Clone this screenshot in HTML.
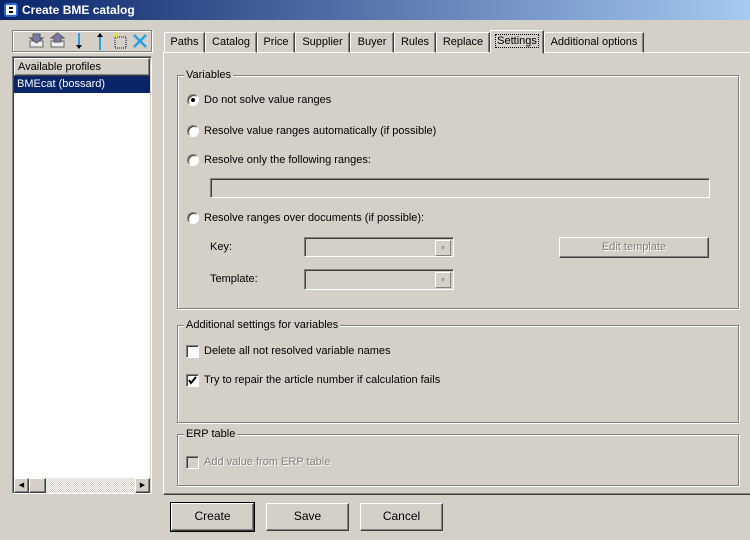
<!DOCTYPE html>
<html><head><style>
*{box-sizing:border-box;margin:0;padding:0}
body{width:750px;height:540px;background:#d4d0c8;font-family:"Liberation Sans",sans-serif;font-size:11px;color:#000;position:relative;overflow:hidden}
.a{position:absolute}
.title{left:0;top:0;width:750px;height:20px;background:linear-gradient(to right,#0a246a,#a6caf0);color:#fff;font-weight:bold;font-size:12px;line-height:20px;padding-left:22px}
.sunk{border:1px solid;border-color:#808080 #fff #fff #808080;box-shadow:inset 1px 1px 0 #404040,inset -1px -1px 0 #d4d0c8}
.etch{border:1px solid #808080;box-shadow:1px 1px 0 #fff,inset 1px 1px 0 #fff}
.btn{border:1px solid;border-color:#fff #404040 #404040 #fff;box-shadow:inset -1px -1px 0 #808080;text-align:center;line-height:25px;font-size:12px}
.tab{top:32px;height:21px;border:1px solid;border-color:#fff #404040 transparent #fff;box-shadow:inset -1px 0 0 #808080;font-size:11px;line-height:18px;text-align:center}
.gl{background:#d4d0c8;padding:0 2px;font-size:11px}
.radio{width:12px;height:12px;border-radius:50%;border:1px solid;border-color:#808080 #fff #fff #808080;background:#fff;box-shadow:inset 1px 1px 0 #404040}
.chk{width:13px;height:13px;border:1px solid;border-color:#808080 #fff #fff #808080;background:#fff;box-shadow:inset 1px 1px 0 #404040}
.lbl{font-size:11px}
.combo{background:#d4d0c8}
.arr{width:16px;height:16px;right:2px;top:2px;border:1px solid;border-color:#fff #808080 #808080 #fff;font-size:7px;color:#a0a0a0;text-align:center;line-height:15px}
</style></head><body>
<div class="a title">Create BME catalog</div>
<div class="a" style="left:4px;top:3px;width:14px;height:14px;border-radius:3px;background:#fff;border:2px solid #2a6ad0"><div style="margin:2px 3px;height:6px;border-top:2px solid #000;border-bottom:2px solid #000"></div></div>

<!-- toolbar -->
<div class="a etch" style="left:12px;top:30px;width:140px;height:22px"></div>
<svg class="a" style="left:28px;top:32px" width="125" height="18">
<rect x="2" y="9" width="13" height="6" fill="#eee" stroke="#666"/><path d="M5 2h7v4h3l-6.5 5-6.5-5h3z" fill="#7a7aa8" stroke="#555"/>
<rect x="23" y="9" width="13" height="6" fill="#eee" stroke="#666"/><path d="M29.5 1l6.5 5h-3v4h-7v-4h-3z" fill="#7a7aa8" stroke="#555"/>
<path d="M51 1v13" stroke="#2aa0e0" stroke-width="2"/><path d="M48 13h6l-3 4z" fill="#000"/>
<path d="M72 4v14" stroke="#2aa0e0" stroke-width="2"/><path d="M69 5h6l-3-4z" fill="#000"/>
<rect x="87" y="5" width="11" height="11" fill="none" stroke="#000080" stroke-dasharray="1 1"/><path d="M88 1l1 4M85 3l4 2" stroke="#ee0"/>
<path d="M106 3l12 12M118 3l-12 12" stroke="#2aa0e0" stroke-width="2.5"/>
</svg>

<!-- list -->
<div class="a sunk" style="left:12px;top:56px;width:140px;height:438px;background:#fff"></div>
<div class="a btn" style="left:14px;top:58px;width:136px;height:18px;line-height:16px;text-align:left;padding-left:3px;font-size:11px;background:#d4d0c8">Available profiles</div>
<div class="a" style="left:14px;top:76px;width:136px;height:17px;background:#0a246a;color:#fff;line-height:17px;padding-left:3px">BMEcat (bossard)</div>
<div class="a" style="left:14px;top:478px;width:136px;height:15px;background:repeating-conic-gradient(#d4d0c8 0 25%,#fff 0 50%) 0 0/2px 2px"></div>
<div class="a btn" style="left:14px;top:478px;width:15px;height:15px;font-size:7px;line-height:13px;background:#d4d0c8">◀</div>
<div class="a btn" style="left:29px;top:478px;width:17px;height:15px;background:#d4d0c8"></div>
<div class="a btn" style="left:135px;top:478px;width:15px;height:15px;font-size:7px;line-height:13px;background:#d4d0c8">▶</div>

<!-- tab panel -->
<div class="a" style="left:163px;top:52px;width:588px;height:443px;border-left:1px solid #fff;border-top:1px solid #fff;border-bottom:1px solid #404040;box-shadow:inset 0 -1px 0 #808080"></div>
<div class="a tab" style="left:164px;width:41px">Paths</div>
<div class="a tab" style="left:205px;width:52px">Catalog</div>
<div class="a tab" style="left:257px;width:38px">Price</div>
<div class="a tab" style="left:295px;width:55px">Supplier</div>
<div class="a tab" style="left:350px;width:44px">Buyer</div>
<div class="a tab" style="left:394px;width:42px">Rules</div>
<div class="a tab" style="left:436px;width:54px">Replace</div>
<div class="a tab" style="left:490px;top:30px;height:24px;width:54px;background:#d4d0c8;line-height:20px"><span style="outline:1px dotted #000;padding:0 1px">Settings</span></div>
<div class="a tab" style="left:544px;width:100px">Additional options</div>

<!-- Variables -->
<div class="a etch" style="left:177px;top:75px;width:562px;height:234px"></div>
<div class="a gl" style="left:184px;top:69px">Variables</div>
<div class="a radio" style="left:187px;top:94px"><div style="width:4px;height:4px;background:#000;border-radius:50%;margin:3px"></div></div>
<div class="a lbl" style="left:204px;top:94px">Do not solve value ranges</div>
<div class="a radio" style="left:187px;top:125px"></div>
<div class="a lbl" style="left:204px;top:125px">Resolve value ranges automatically (if possible)</div>
<div class="a radio" style="left:187px;top:154px"></div>
<div class="a lbl" style="left:204px;top:154px">Resolve only the following ranges:</div>
<div class="a sunk" style="left:210px;top:178px;width:500px;height:20px"></div>
<div class="a radio" style="left:187px;top:212px"></div>
<div class="a lbl" style="left:204px;top:212px">Resolve ranges over documents (if possible):</div>
<div class="a lbl" style="left:210px;top:241px">Key:</div>
<div class="a sunk combo" style="left:304px;top:237px;width:150px;height:20px"><div class="a arr">▼</div></div>
<div class="a btn" style="left:559px;top:237px;width:150px;height:21px;line-height:19px;color:#808080;font-size:11px;text-shadow:1px 1px 0 #fff">Edit template</div>
<div class="a lbl" style="left:210px;top:273px">Template:</div>
<div class="a sunk combo" style="left:304px;top:269px;width:150px;height:21px"><div class="a arr">▼</div></div>

<!-- Additional settings -->
<div class="a etch" style="left:177px;top:325px;width:562px;height:98px"></div>
<div class="a gl" style="left:184px;top:319px">Additional settings for variables</div>
<div class="a chk" style="left:186px;top:345px"></div>
<div class="a lbl" style="left:204px;top:345px">Delete all not resolved variable names</div>
<div class="a chk" style="left:186px;top:374px"><svg width="11" height="11" style="display:block"><path d="M2 5l2 3 5-6" stroke="#000" stroke-width="2" fill="none"/></svg></div>
<div class="a lbl" style="left:204px;top:374px">Try to repair the article number if calculation fails</div>

<!-- ERP -->
<div class="a etch" style="left:177px;top:434px;width:562px;height:52px"></div>
<div class="a gl" style="left:184px;top:428px">ERP table</div>
<div class="a chk" style="left:186px;top:456px;background:#d4d0c8"></div>
<div class="a lbl" style="left:204px;top:456px;color:#808080;text-shadow:1px 1px 0 #fff">Add value from ERP table</div>

<!-- buttons -->
<div class="a btn" style="left:171px;top:503px;width:83px;height:28px;outline:1px solid #000">Create</div>
<div class="a btn" style="left:266px;top:503px;width:83px;height:28px">Save</div>
<div class="a btn" style="left:360px;top:503px;width:83px;height:28px">Cancel</div>
</body></html>
